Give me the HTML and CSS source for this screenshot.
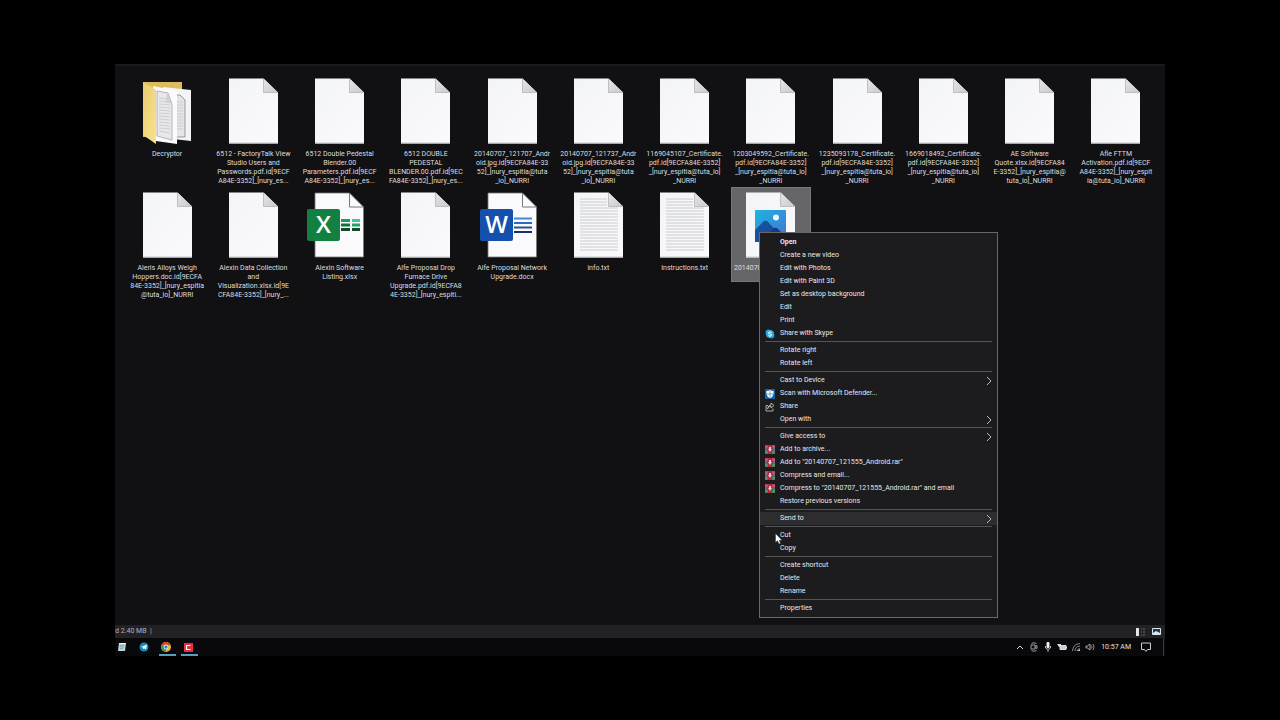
FILE: index.html
```
<!DOCTYPE html>
<html lang="en">
<head>
    <meta charset="UTF-8">
    <meta name="viewport" content="width=device-width, initial-scale=1.0">
    <title>File Explorer</title>
    <link rel="stylesheet" href="styles.css">
</head>
<body>
    <!-- Shared icons -->
    <svg class="sprites" aria-hidden="true">
        <defs>
            <linearGradient id="paper" x1="0" y1="0" x2="1" y2="1">
                <stop offset="0" stop-color="#f3f4f6"/>
                <stop offset="1" stop-color="#fafafc"/>
            </linearGradient>
            <linearGradient id="fold" x1="0" y1="0" x2="1" y2="1">
                <stop offset="0" stop-color="#e6e6e6"/>
                <stop offset="1" stop-color="#c9c9cb"/>
            </linearGradient>
            <linearGradient id="folder" x1="0" y1="0" x2="1" y2="1">
                <stop offset="0" stop-color="#e9cd73"/>
                <stop offset="1" stop-color="#fae18c"/>
            </linearGradient>
            <linearGradient id="sky" x1="0" y1="0" x2="1" y2="1">
                <stop offset="0" stop-color="#1cb4e4"/>
                <stop offset="1" stop-color="#4a70d0"/>
            </linearGradient>
        </defs>
        <symbol id="doc" viewBox="0 0 65 66">
            <path d="M8 .5h34.500L57 14.500V65.500H8z" fill="url(#paper)"/>
            <path d="M42.500 .5L57 14.500H42.500z" fill="url(#fold)"/>
            <path d="M42.500 1V14.500H56.500" fill="none" stroke="#b4b4b6" stroke-width=".8"/>
            <path d="M8 65H57" stroke="#c8c8ca"/>
        </symbol>
        <symbol id="office-doc" viewBox="0 0 65 66">
            <path d="M8 1h34.500L56.500 15V65H8z" fill="#fafafc" stroke="#77777a" stroke-width=".8"/>
            <path d="M42.500 1V15H56.500" fill="none" stroke="#77777a"/>
        </symbol>
        <symbol id="excel" viewBox="0 0 65 66">
            <use href="#office-doc"/>
            <path d="M34 28.500h9" stroke="#1d9a5c" stroke-width="3"/>
            <path d="M45 28.500h8" stroke="#3fc997" stroke-width="3"/>
            <path d="M34 33h9" stroke="#14703d" stroke-width="3"/>
            <path d="M45 33h8" stroke="#24a366" stroke-width="3"/>
            <path d="M34 37.500h9M45 37.500h8" stroke="#134a2c" stroke-width="3"/>
            <rect y="17" width="33" height="32" rx="2" fill="#128040"/>
            <text x="16.500" y="41" class="badge-letter">X</text>
        </symbol>
        <symbol id="word" viewBox="0 0 65 66">
            <use href="#office-doc"/>
            <path d="M34 26.500h18" stroke="#4589d6" stroke-width="2"/>
            <path d="M34 31h18" stroke="#2d6bc0" stroke-width="2"/>
            <path d="M34 35.500h18" stroke="#245099" stroke-width="2"/>
            <path d="M34 40h18" stroke="#173366" stroke-width="2"/>
            <rect y="17" width="33" height="32" rx="2" fill="#1450ae"/>
            <text x="16.500" y="41" class="badge-letter">W</text>
        </symbol>
        <symbol id="text-file" viewBox="0 0 65 66">
            <use href="#doc"/>
            <path d="M14 7h27M14 10h27M14 13h27M14 16h38M14 19h38M14 22h38M14 25h38M14 28h38M14 31h38M14 34h38M14 37h38M14 40h38M14 43h38M14 46h38M14 49h38M14 52h38M14 55h38M14 58h38" stroke="#cbccd0" stroke-width="1"/>
        </symbol>
        <symbol id="picture" viewBox="0 0 65 66">
            <use href="#doc"/>
            <rect x="17" y="18" width="31" height="32" rx="1" fill="url(#sky)"/>
            <path d="M17 38L26 29Q28 28 30 30L48 49V50H17z" fill="#17509c"/>
            <path d="M27 45L36 36Q38 35 40 37L48 45V50H22z" fill="#123c82"/>
            <circle cx="38" cy="25.500" r="3" fill="#e8f6fd"/>
        </symbol>
        <symbol id="folder-open" viewBox="0 1 65 66">
            <path d="M8 5H47V60H8z" fill="#dcbc5f"/>
            <path d="M28 10L56 13V64L38 62z" fill="#f4f4f6"/>
            <path d="M39 18H45L50 23V60H39z" fill="#e4e4e6" stroke="#77777a" stroke-width=".7"/>
            <path d="M40 25h8M40 28h8M40 31h8M40 34h8M40 37h8M40 40h8M40 43h8M40 46h8M40 49h8M40 52h8" stroke="#c5c5c8" stroke-width=".7"/>
            <path d="M18 9L42 14V67L21 64z" fill="#fafafb"/>
            <path d="M22 14L33 16L37 27V63L22 59z" fill="#e8e8ea" stroke="#8a8a8d" stroke-width=".6"/>
            <path d="M24 21l8 1M24 24l9 1M24 27l11 1M24 30l11 1M24 33l11 1M24 36l11 1M24 39l11 1M24 42l11 1M24 45l11 1M24 48l11 1M24 51l11 1M24 54l11 2" stroke="#c1c1c4" stroke-width=".7"/>
            <path d="M32 16L37 27L31 25z" fill="#cfcfd1"/>
            <path d="M8 5L21 13V67L8 58z" fill="url(#folder)"/>
        </symbol>
        <symbol id="arrow" viewBox="0 0 6 10">
            <path d="M1 1L5 5L1 9" fill="none" stroke="#b9b9bb" stroke-width="1"/>
        </symbol>
        <symbol id="rar" viewBox="0 0 10 10">
            <path d="M0 0h10v3H0z" fill="#c2405c"/>
            <path d="M0 3h10v3H0z" fill="#5a4f74"/>
            <path d="M0 6h10v3H0z" fill="#3f8a54"/>
            <path d="M3 0h4v9H3z" fill="#b02c40"/>
            <path d="M4 2h2v2h1l-2 3-2-3h1z" fill="#f2c6c8"/>
            <path d="M1 1v7M9 1v7" stroke="#ba9298" stroke-width=".6"/>
        </symbol>
    </svg>

    <main class="desktop">
        <ul class="files">
            <li class="file"><svg class="file-icon"><use href="#folder-open"/></svg><span>Decryptor</span></li>
            <li class="file"><svg class="file-icon"><use href="#doc"/></svg><span>6512 - FactoryTalk View<br>Studio Users and<br>Passwords.pdf.id[9ECF<br>A84E-3352]_[nury_es...</span></li>
            <li class="file"><svg class="file-icon"><use href="#doc"/></svg><span>6512 Double Pedestal<br>Blender.00<br>Parameters.pdf.id[9ECF<br>A84E-3352]_[nury_es...</span></li>
            <li class="file"><svg class="file-icon"><use href="#doc"/></svg><span>6512 DOUBLE<br>PEDESTAL<br>BLENDER.00.pdf.id[9EC<br>FA84E-3352]_[nury_es...</span></li>
            <li class="file"><svg class="file-icon"><use href="#doc"/></svg><span>20140707_121707_Andr<br>oid.jpg.id[9ECFA84E-33<br>52]_[nury_espitia@tuta<br>_io]_NURRI</span></li>
            <li class="file"><svg class="file-icon"><use href="#doc"/></svg><span>20140707_121737_Andr<br>oid.jpg.id[9ECFA84E-33<br>52]_[nury_espitia@tuta<br>_io]_NURRI</span></li>
            <li class="file"><svg class="file-icon"><use href="#doc"/></svg><span>1169045107_Certificate.<br>pdf.id[9ECFA84E-3352]<br>_[nury_espitia@tuta_io]<br>_NURRI</span></li>
            <li class="file"><svg class="file-icon"><use href="#doc"/></svg><span>1203049592_Certificate.<br>pdf.id[9ECFA84E-3352]<br>_[nury_espitia@tuta_io]<br>_NURRI</span></li>
            <li class="file"><svg class="file-icon"><use href="#doc"/></svg><span>1235093178_Certificate.<br>pdf.id[9ECFA84E-3352]<br>_[nury_espitia@tuta_io]<br>_NURRI</span></li>
            <li class="file"><svg class="file-icon"><use href="#doc"/></svg><span>1669018492_Certificate.<br>pdf.id[9ECFA84E-3352]<br>_[nury_espitia@tuta_io]<br>_NURRI</span></li>
            <li class="file"><svg class="file-icon"><use href="#doc"/></svg><span>AE Software<br>Quote.xlsx.id[9ECFA84<br>E-3352]_[nury_espitia@<br>tuta_io]_NURRI</span></li>
            <li class="file"><svg class="file-icon"><use href="#doc"/></svg><span>Afle FTTM<br>Activation.pdf.id[9ECF<br>A84E-3352]_[nury_espit<br>ia@tuta_io]_NURRI</span></li>
            <li class="file"><svg class="file-icon"><use href="#doc"/></svg><span>Aleris Alloys Weigh<br>Hoppers.doc.id[9ECFA<br>84E-3352]_[nury_espitia<br>@tuta_io]_NURRI</span></li>
            <li class="file"><svg class="file-icon"><use href="#doc"/></svg><span>Alexin Data Collection<br>and<br>Visualization.xlsx.id[9E<br>CFA84E-3352]_[nury_...</span></li>
            <li class="file"><svg class="file-icon"><use href="#excel"/></svg><span>Alexin Software<br>Listing.xlsx</span></li>
            <li class="file"><svg class="file-icon"><use href="#doc"/></svg><span>Alfe Proposal Drop<br>Furnace Drive<br>Upgrade.pdf.id[9ECFA8<br>4E-3352]_[nury_espiti...</span></li>
            <li class="file"><svg class="file-icon"><use href="#word"/></svg><span>Alfe Proposal Network<br>Upgrade.docx</span></li>
            <li class="file"><svg class="file-icon"><use href="#text-file"/></svg><span>info.txt</span></li>
            <li class="file"><svg class="file-icon"><use href="#text-file"/></svg><span>Instructions.txt</span></li>
            <li class="file selected"><svg class="file-icon"><use href="#picture"/></svg><span>20140707_121555_And<br>roid.jpg</span></li>
        </ul>

        <footer class="status-bar">
            <span class="status-text">d 2.40 MB &nbsp;|</span>
            <span class="views">
                <button type="button" aria-label="Details view"><svg width="10" height="8" viewBox="0 0 10 8"><path d="M0 0h3v8H0z" fill="#e4e4e4"/><path d="M5 1h1M7 1h2M5 4h1M7 4h2M5 7h1M7 7h2" stroke="#6c6c6e"/></svg></button>
                <button type="button" aria-label="Large icons view"><svg width="10" height="8" viewBox="0 0 10 8"><path d="M.5 .5h8v6h-8z" fill="#24384a" stroke="#d9e5ef"/><path d="M1 5l3-2 4 2v1H1z" fill="#d9e5ef"/></svg></button>
            </span>
        </footer>

        <footer class="taskbar">
            <div class="apps">
                <button type="button" class="app" aria-label="Notepad"><svg width="10" height="10" viewBox="0 0 10 10"><path d="M2 1h7L8 9H1z" fill="#b9d5d8"/><path d="M2 1h7v1H2z" fill="#e9f3f3"/><path d="M3 3.500h4M3 5h4M3 6.500h3" stroke="#648c93" stroke-width=".6"/></svg></button>
                <button type="button" class="app" aria-label="Telegram"><svg width="10" height="10" viewBox="0 0 10 10"><circle cx="5" cy="5" r="4.500" fill="#168bb8"/><path d="M2 5l6-2.500L7 7.500 5 6.200 4 7.200V5.500z" fill="#fff"/></svg></button>
                <button type="button" class="app running" aria-label="Chrome"><svg width="10" height="10" viewBox="0 0 10 10"><circle cx="5" cy="5" r="5" fill="#e3b92e"/><path d="M5 5L.7 2.500A5 5 0 0 1 9.300 2.500z" fill="#d9412f"/><path d="M5 5L.7 2.500A5 5 0 0 0 5 10z" fill="#2e9b4d"/><circle cx="5" cy="5" r="2.400" fill="#fff"/><circle cx="5" cy="5" r="1.700" fill="#3c78d8"/></svg></button>
                <button type="button" class="app running" aria-label="Camtasia"><svg width="10" height="10" viewBox="0 0 10 10"><path d="M1 1h9v9H1z" fill="#e02f3f"/><path d="M7.500 3.500H3.500V7.500H7.500" fill="none" stroke="#fff" stroke-width="1.200"/></svg></button>
            </div>
            <div class="tray">
                <button type="button" aria-label="Show hidden icons"><svg width="10" height="10" viewBox="0 0 10 10"><path d="M2 7l3-3 3 3" fill="none" stroke="#ddd"/></svg></button>
                <button type="button" aria-label="Meet now"><svg width="10" height="10" viewBox="0 0 10 10"><path d="M2.500 1.500Q5 0 7.500 1.500M2.500 8.500Q5 10 7.500 8.500M2 3h4v4H2zM6 4.500l2-1v3l-2-1" fill="none" stroke="#bbb" stroke-width=".8"/></svg></button>
                <button type="button" aria-label="Microphone"><svg width="10" height="10" viewBox="0 0 10 10"><rect x="3.500" y="0" width="3" height="6" rx="1" fill="#eee"/><path d="M2.500 4v2Q5 9 7.500 6V4M5 7v3" fill="none" stroke="#ddd" stroke-width=".8"/></svg></button>
                <button type="button" aria-label="Battery"><svg width="10" height="10" viewBox="0 0 10 10"><path d="M3 3.500h6v4H3z" fill="#ccc" stroke="#ddd"/><path d="M0 2h4v3H2z" fill="#ddd"/><path d="M9.500 4.500v2" stroke="#ddd"/></svg></button>
                <button type="button" aria-label="Network"><svg width="10" height="10" viewBox="0 0 10 10"><path d="M1.500 9Q2 2 9 1.500M4 9Q4 4.500 9 4M6 9Q6 7 9 6.500" fill="none" stroke="#929294" stroke-width=".9"/><path d="M6 9l3-2v2z" fill="#ccc"/></svg></button>
                <button type="button" aria-label="Volume"><svg width="10" height="10" viewBox="0 0 10 10"><path d="M1 4h1.500L5 2v6L2.500 6H1z" fill="none" stroke="#ccc" stroke-width=".8"/><path d="M6.500 3.500Q7.500 5 6.500 6.500M8 2Q10 5 8 8" fill="none" stroke="#aaa" stroke-width=".8"/></svg></button>
                <time class="clock">10:57 AM</time>
                <button type="button" aria-label="Notifications"><svg width="10" height="10" viewBox="0 0 10 10"><path d="M.5 1h9v6.500H6.500L5 9.500 3.500 7.500h-3z" fill="none" stroke="#ccc"/></svg></button>
                <span class="show-desktop"></span>
            </div>
        </footer>

        <!-- Context menu of the selected picture -->
        <div class="menu">
            <button type="button" class="default">Open</button>
            <button type="button">Create a new video</button>
            <button type="button">Edit with Photos</button>
            <button type="button">Edit with Paint 3D</button>
            <button type="button">Set as desktop background</button>
            <button type="button">Edit</button>
            <button type="button">Print</button>
            <button type="button"><svg class="menu-icon" viewBox="0 0 10 10"><circle cx="3.500" cy="3.500" r="3" fill="#1f9fd8"/><circle cx="6.500" cy="6.500" r="3" fill="#1787b8"/><circle cx="5" cy="5" r="4" fill="#28abe0"/><path d="M6.700 3.500Q5 2.300 3.700 3.400T5 5T6.300 6.700T3.300 6.500" fill="none" stroke="#fff"/></svg>Share with Skype</button>
            <hr>
            <button type="button">Rotate right</button>
            <button type="button">Rotate left</button>
            <hr>
            <button type="button">Cast to Device<svg class="arrow"><use href="#arrow"/></svg></button>
            <button type="button"><svg class="menu-icon" viewBox="0 0 10 10"><path d="M0 0h10v10H0z" fill="#17629c"/><path d="M1.500 2Q4 2 5 1Q6 2 8.500 2V5Q8 8 5 9Q2 8 1.500 5z" fill="#fff"/><path d="M5 2v6M2 5h6" stroke="#4b90c4" stroke-width=".8"/></svg>Scan with Microsoft Defender...</button>
            <button type="button"><svg class="menu-icon" viewBox="0 0 10 10"><path d="M3 3.500H1V9H8V6.500M2.500 7Q3 4 6 4V6L9 3.500 6 1V3Q3 3 2.500 7" fill="none" stroke="#ccc" stroke-width=".8"/></svg>Share</button>
            <button type="button">Open with<svg class="arrow"><use href="#arrow"/></svg></button>
            <hr>
            <button type="button">Give access to<svg class="arrow"><use href="#arrow"/></svg></button>
            <button type="button"><svg class="menu-icon"><use href="#rar"/></svg>Add to archive...</button>
            <button type="button"><svg class="menu-icon"><use href="#rar"/></svg>Add to "20140707_121555_Android.rar"</button>
            <button type="button"><svg class="menu-icon"><use href="#rar"/></svg>Compress and email...</button>
            <button type="button"><svg class="menu-icon"><use href="#rar"/></svg>Compress to "20140707_121555_Android.rar" and email</button>
            <button type="button">Restore previous versions</button>
            <hr>
            <button type="button" class="active">Send to<svg class="arrow"><use href="#arrow"/></svg></button>
            <hr>
            <button type="button">Cut</button>
            <button type="button">Copy</button>
            <hr>
            <button type="button">Create shortcut</button>
            <button type="button">Delete</button>
            <button type="button">Rename</button>
            <hr>
            <button type="button">Properties</button>
        </div>

        <svg class="cursor" viewBox="0 0 8 12"><path d="M.5 .5V9.500L2.500 7.800 4 11 5.500 10.300 4.200 7.300H7z" fill="#fff" stroke="#222" stroke-width=".4"/></svg>
    </main>
</body>
</html>
```

FILE: styles.css
```
* {
    box-sizing: border-box;
}
body {
    margin: 0;
    padding: 64px 115px;
    min-height: 100vh;
    display: flex;
    background-color: #000;
    color: #dededf;
    font-family: Roboto, "Noto Sans", sans-serif;
    font-size: 7px;
    line-height: 9px;
}
button {
    margin: 0;
    padding: 0;
    border: none;
    background: none;
    color: inherit;
    font: inherit;
}
svg {
    display: block;
}
.sprites {
    position: absolute;
    width: 0;
    height: 0;
}
.badge-letter {
    fill: #fff;
    font-family: "Open Sans", sans-serif;
    font-size: 24px;
    font-weight: 600;
    text-anchor: middle;
}
.desktop {
    position: relative; /* Anchor for the menu and the cursor */
    flex: 1;
    display: flex;
    flex-direction: column;
    background-color: #111013;
    border-top: 2px solid #19191b;
}

/* Files */
.files {
    flex: 1;
    display: grid;
    grid-template-columns: repeat(12, 1fr);
    align-content: start;
    align-items: start;
    row-gap: 1px;
    margin: 0;
    padding: 7px 6px 0 9px;
    list-style: none;
}
.file {
    display: flex;
    flex-direction: column;
    align-items: center;
    gap: 6px;
    margin: 0 3px;
    padding-top: 5px;
    text-align: center;
    white-space: nowrap;
}
.file-icon {
    width: 65px;
    height: 66px;
}
.selected {
    background-color: #666568;
    box-shadow: inset 0 0 0 1px #777679;
}

/* Status bar */
.status-bar {
    display: flex;
    justify-content: space-between;
    align-items: center;
    height: 13px;
    padding-right: 3px;
    background-color: #222124;
    color: #b4b4b6;
}
.views {
    display: flex;
    gap: 6px;
}

/* Taskbar */
.taskbar {
    display: flex;
    justify-content: space-between;
    height: 18px;
    background-color: #09090b;
}
.apps {
    display: flex;
    gap: 5px;
}
.app {
    width: 17px;
    padding: 2px 0 0 2px;
    border-bottom: 2px solid transparent;
}
.running {
    border-bottom-color: #5c9dbd;
}
.tray {
    display: flex;
    align-items: center;
    gap: 4px;
}
.clock {
    margin: 0 6px 0 2px;
    color: #e2e2e2;
}
.show-desktop {
    width: 1px;
    height: 18px;
    margin: 0 1px 0 8px;
    background-color: #3a3a3c;
}

/* Context menu */
.menu {
    position: absolute;
    top: 166px;
    left: 644px;
    width: 239px;
    padding: 3px 0 2px;
    background-color: #1c1b1e;
    border: 1px solid #69686b;
    color: #e8e8ea;
}
.menu button {
    display: flex;
    align-items: center;
    position: relative;
    width: 100%;
    height: 13px;
    padding-left: 20px;
    text-align: left;
    white-space: nowrap;
}
.menu .default {
    font-weight: bold;
}
.menu .active {
    background-color: #2d2c2f;
}
.menu hr {
    height: 1px;
    margin: 1px 5px 2px;
    border: none;
    background-color: #555457;
}
.menu-icon {
    position: absolute;
    left: 5px;
    width: 10px;
    height: 10px;
}
.arrow {
    position: absolute;
    right: 5px;
    width: 6px;
    height: 10px;
}
.cursor {
    position: absolute;
    top: 467px;
    left: 660px;
    width: 8px;
    height: 12px;
}
```
